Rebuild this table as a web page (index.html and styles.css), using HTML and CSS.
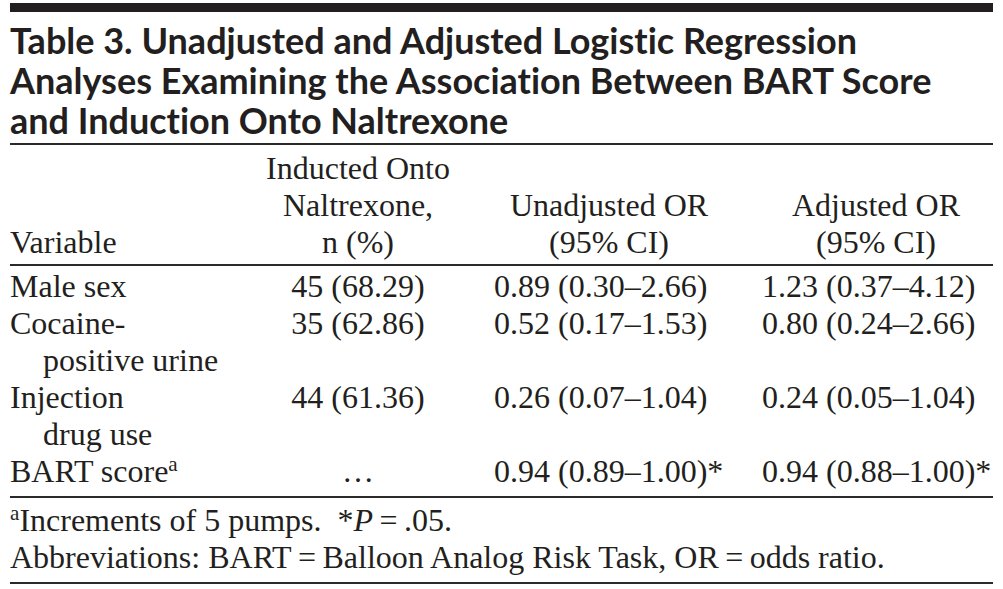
FILE: index.html
```html
<!DOCTYPE html>
<html lang="en">
<head>
<meta charset="utf-8">
<title>Table 3</title>
<link rel="stylesheet" href="styles.css">
</head>
<body>
<div class="table">
  <div class="bar"></div>
  <h1 class="title">Table 3. Unadjusted and Adjusted Logistic Regression<br>Analyses Examining the Association Between BART Score<br>and Induction Onto Naltrexone</h1>
  <div class="grid head">
    <div class="c1">Variable</div>
    <div class="c2">Inducted Onto<br>Naltrexone,<br>n (%)</div>
    <div class="c3">Unadjusted OR<br>(95% CI)</div>
    <div class="c4">Adjusted OR<br>(95% CI)</div>
  </div>
  <div class="grid body">
    <div class="c1">Male sex</div>
    <div class="c2">45 (68.29)</div>
    <div class="c3">0.89 (0.30–2.66)</div>
    <div class="c4">1.23 (0.37–4.12)</div>

    <div class="c1">Cocaine-<br>positive urine</div>
    <div class="c2">35 (62.86)</div>
    <div class="c3">0.52 (0.17–1.53)</div>
    <div class="c4">0.80 (0.24–2.66)</div>

    <div class="c1">Injection<br>drug use</div>
    <div class="c2">44 (61.36)</div>
    <div class="c3">0.26 (0.07–1.04)</div>
    <div class="c4">0.24 (0.05–1.04)</div>

    <div class="c1">BART score<sup class="sup">a</sup></div>
    <div class="c2">…</div>
    <div class="c3">0.94 (0.89–1.00)*</div>
    <div class="c4">0.94 (0.88–1.00)*</div>
  </div>
  <div class="notes">
    <p class="note"><sup class="sup">a</sup>Increments of 5 pumps.&nbsp; *<i>P</i>&#8201;=&#8201;.05.</p>
    <p class="note">Abbreviations: BART&#8201;=&#8201;Balloon Analog Risk Task, OR&#8201;=&#8201;odds ratio.</p>
  </div>
</div>
</body>
</html>
```
FILE: styles.css
```css
html, body {
  margin: 0;
  padding: 0;
  background: #ffffff;
}

.table {
  padding: 3px 10px 0 10px;
  width: 983px;
  color: #231f20;
  font-family: "Liberation Serif", "Times New Roman", serif;
  font-size: 32px;
}

.bar {
  height: 9px;
  background: #231f20;
}

.title {
  margin: 8px 0 0 0;
  padding: 0 0 3px 0;
  font-family: Lato, "Open Sans", sans-serif;
  font-weight: 700;
  font-size: 36px;
  line-height: 40px;
  font-variant-ligatures: none;
  font-feature-settings: "liga" 0, "clig" 0;
  border-bottom: 2px solid #2a2a2a;
}

.grid {
  display: grid;
  grid-template-columns: 250px 196px 282px 1fr;
  line-height: 37px;
  white-space: nowrap;
}

.head {
  padding: 5px 0 3px 0;
  align-items: end;
  border-bottom: 2px solid #2a2a2a;
}

.body {
  padding: 2px 0 6px 0;
  align-items: start;
  border-bottom: 2px solid #2a2a2a;
}

.c1 {
  padding-left: 33px;
  text-indent: -33px;
}

.c2 {
  text-align: center;
}

.c3 {
  padding-left: 38px;
}

.c4 {
  padding-left: 24px;
}

.head .c3 {
  text-align: center;
  padding-right: 14px;
}

.head .c4 {
  text-align: center;
  padding-right: 3px;
}

.sup {
  font-size: 0.66em;
  line-height: 0;
  vertical-align: 0.5em;
}

.notes {
  padding: 4px 0 6px 0;
  border-bottom: 2px solid #2a2a2a;
}

.note {
  margin: 0;
  line-height: 37px;
  white-space: nowrap;
}
```
